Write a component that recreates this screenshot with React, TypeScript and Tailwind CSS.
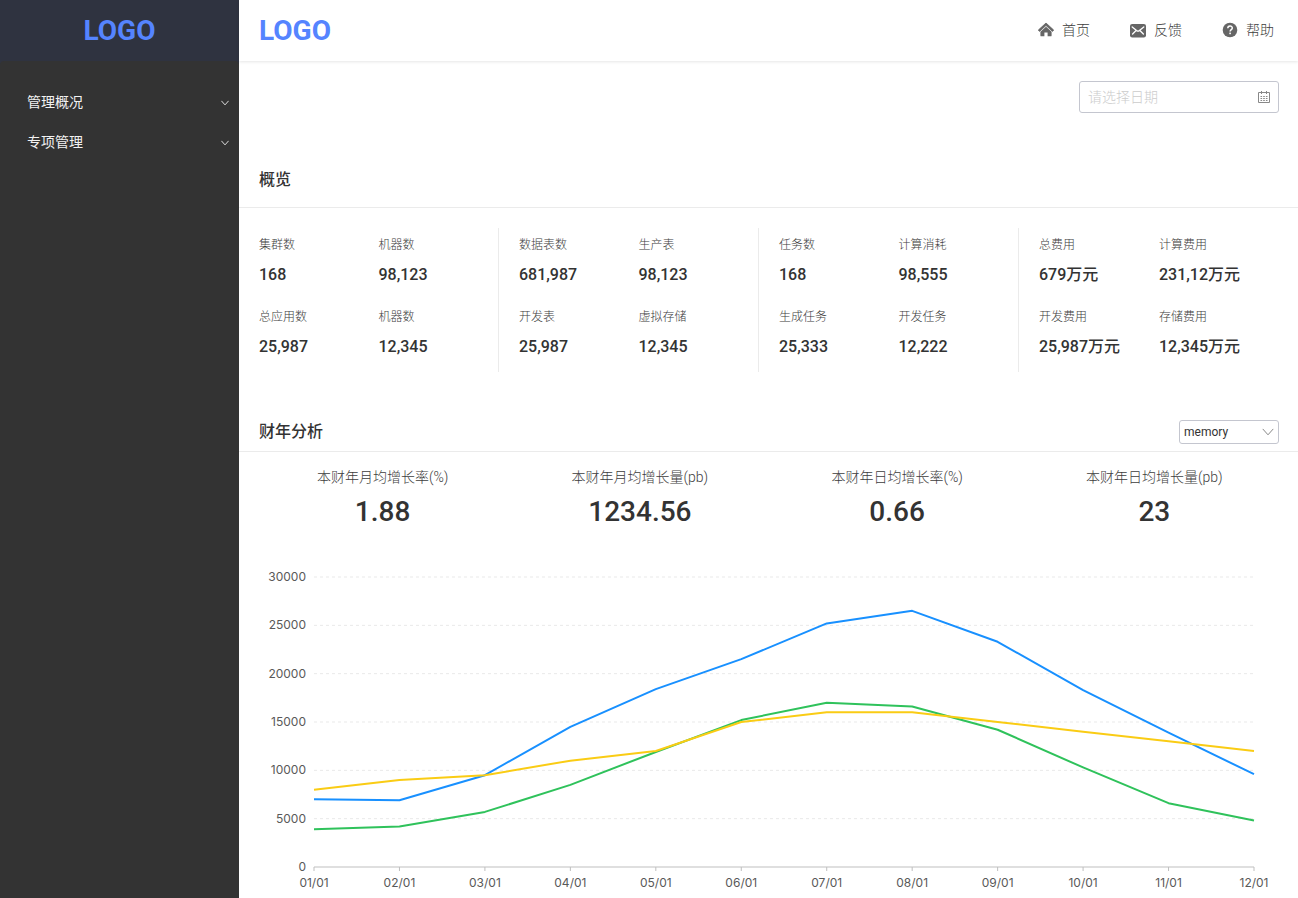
import React from 'react';

const menu = ['管理概况', '专项管理'];

const groups = [
  [
    ['集群数', '168'],
    ['机器数', '98,123'],
    ['总应用数', '25,987'],
    ['机器数', '12,345'],
  ],
  [
    ['数据表数', '681,987'],
    ['生产表', '98,123'],
    ['开发表', '25,987'],
    ['虚拟存储', '12,345'],
  ],
  [
    ['任务数', '168'],
    ['计算消耗', '98,555'],
    ['生成任务', '25,333'],
    ['开发任务', '12,222'],
  ],
  [
    ['总费用', '679万元'],
    ['计算费用', '231,12万元'],
    ['开发费用', '25,987万元'],
    ['存储费用', '12,345万元'],
  ],
];

const growth = [
  ['本财年月均增长率(%)', '1.88'],
  ['本财年月均增长量(pb)', '1234.56'],
  ['本财年日均增长率(%)', '0.66'],
  ['本财年日均增长量(pb)', '23'],
];

const months = ['01', '02', '03', '04', '05', '06', '07', '08', '09', '10', '11', '12'];
const ticks = [0, 5000, 10000, 15000, 20000, 25000, 30000];
const series = [
  { color: '#1890ff', data: [7000, 6900, 9500, 14500, 18400, 21500, 25200, 26500, 23300, 18300, 13900, 9600] },
  { color: '#2fc25b', data: [3900, 4200, 5700, 8500, 11900, 15200, 17000, 16600, 14200, 10300, 6600, 4800] },
  { color: '#facc14', data: [8000, 9000, 9500, 11000, 12000, 15000, 16000, 16000, 15000, 14000, 13000, 12000] },
];

const px = (i: number) => 75 + (i * 940) / 11;
const py = (v: number) => 307 - (v * 290) / 30000;

function HomeIcon() {
  return (
    <svg viewBox="0 0 16 16" className="size-4" fill="#666" aria-hidden="true">
      <path d="M8 1 0.3 8.1 1.5 9.4 8 3.5 14.5 9.4 15.7 8.1Z" stroke="#666" strokeWidth=".8" strokeLinejoin="round" />
      <path d="M8 4.7 2.4 9.8V13.4Q2.4 14.3 3.3 14.3H6.4V10.6H9.6V14.3H12.7Q13.6 14.3 13.6 13.4V9.8Z" />
    </svg>
  );
}

function MailIcon() {
  return (
    <svg viewBox="0 0 16 16" className="size-4" aria-hidden="true">
      <rect x="0" y="1.9" width="16" height="13.6" rx="2.2" fill="#666" />
      <path d="M2.2 5 6.6 8.6Q8 9.6 9.4 8.6L13.8 5M2.6 12 5.6 9M13.4 12 10.4 9" fill="none" stroke="#fff" strokeWidth="1.3" strokeLinecap="round" />
    </svg>
  );
}

function HelpIcon() {
  return (
    <svg viewBox="0 0 16 16" className="size-4" aria-hidden="true">
      <circle cx="8" cy="8" r="7.3" fill="#666" />
      <path d="M5.8 6.3C5.8 3.2 10.3 3.4 10.3 6 10.3 7.7 8.1 7.7 8.1 9.5" fill="none" stroke="#fff" strokeWidth="1.5" />
      <rect x="7.3" y="10.6" width="1.6" height="1.6" fill="#fff" />
    </svg>
  );
}

function CalendarIcon() {
  return (
    <svg viewBox="0 0 12 12" className="size-3" fill="none" stroke="#888" aria-hidden="true">
      <path d="M.5 1.5H11.5V11.5H.5ZM3.5 0V3M8.5 0V3" />
      <path d="M2.5 5.5H9.5M2.5 7.5H9.5M2.5 9.5H9.5" strokeDasharray="1.6 1.1" />
    </svg>
  );
}

function Chevron({ className, color }: { className: string; color: string }) {
  return (
    <svg viewBox="0 0 12 12" className={className} fill="none" stroke={color} aria-hidden="true">
      <path d="M1 3.2 6 8.8 11 3.2" vectorEffect="non-scaling-stroke" strokeLinecap="round" strokeLinejoin="round" />
    </svg>
  );
}

const nav = [
  { label: '首页', icon: <HomeIcon /> },
  { label: '反馈', icon: <MailIcon /> },
  { label: '帮助', icon: <HelpIcon /> },
];

function TrendChart() {
  return (
    <svg viewBox="0 0 1059 338" className="block w-full font-[Inter,sans-serif] text-[12px]" role="img" aria-label="财年分析">
      {ticks.slice(1).map((t) => (
        <line key={t} x1="75" x2="1015" y1={py(t)} y2={py(t)} stroke="#e9e9e9" strokeDasharray="3 3" />
      ))}
      {ticks.map((t) => (
        <text key={t} x="67" y={py(t) + 4} textAnchor="end" fill="#595959">
          {t}
        </text>
      ))}
      <line x1="75" x2="1015" y1="307" y2="307" stroke="#bfbfbf" />
      {months.map((m, i) => (
        <g key={m}>
          <line x1={px(i)} x2={px(i)} y1="307" y2="311" stroke="#bfbfbf" />
          <text x={px(i)} y="327" textAnchor="middle" fill="#595959">
            {m}/01
          </text>
        </g>
      ))}
      {series.map((s) => (
        <polyline key={s.color} points={s.data.map((v, i) => `${px(i)},${py(v)}`).join(' ')} fill="none" stroke={s.color} strokeWidth="2" strokeLinejoin="round" />
      ))}
    </svg>
  );
}

export default function App() {
  return (
    <div className="flex min-h-screen bg-white font-[Roboto,'Noto_Sans_CJK_SC',sans-serif] text-sm text-[#333]">
      <aside className="flex w-[239px] shrink-0 flex-col bg-[#2f3340]">
        <a href="#" className="flex h-[61px] items-center justify-center text-[28px] font-bold text-[#5584ff]">
          LOGO
        </a>
        <nav className="flex-1 rounded-t bg-[#333] pt-[21px]">
          {menu.map((m) => (
            <button key={m} type="button" className="flex h-10 w-full items-center justify-between pr-[10px] pl-[27px] text-[#f2f2f2]">
              {m}
              <Chevron className="mt-0.5 size-2" color="#ddd" />
            </button>
          ))}
        </nav>
      </aside>

      <div className="min-w-0 flex-1">
        <header className="flex h-[61px] items-center justify-between pr-6 pl-5 shadow-[0_1px_3px_rgba(0,0,0,0.1)]">
          <a href="#" className="text-[28px] font-bold text-[#5584ff]">
            LOGO
          </a>
          <nav className="flex gap-10 pb-0.5">
            {nav.map((n) => (
              <a key={n.label} href="#" className="flex items-center gap-2 font-light text-[#3d3d3d]">
                {n.icon}
                {n.label}
              </a>
            ))}
          </nav>
        </header>

        <main>
          <div className="flex justify-end pt-5 pr-[19px]">
            <label className="flex h-8 w-[200px] items-center rounded-[3px] border border-[#c4c6cf] px-2">
              <input aria-label="日期" placeholder="请选择日期" className="min-w-0 flex-1 font-light outline-none placeholder:text-[#ccc]" />
              <CalendarIcon />
            </label>
          </div>

          <section className="mt-[39px]">
            <h2 className="flex h-14 items-center border-b border-[#ebebeb] pl-5 text-base font-medium">概览</h2>
            <div className="grid grid-cols-4 pt-5 pr-[19px]">
              {groups.map((g, i) => (
                <dl key={i} className="grid grid-cols-2 border-r border-[#ebebeb] pl-5 last:border-r-0">
                  {g.map(([label, value]) => (
                    <div key={label + value} className="h-[72px] pt-2">
                      <dt className="text-xs leading-[18px] font-light text-[#3d3d3d]">{label}</dt>
                      <dd className="mt-[9px] text-base leading-6 font-medium">{value}</dd>
                    </div>
                  ))}
                </dl>
              ))}
            </div>
          </section>

          <section className="mt-10">
            <div className="flex h-10 items-center justify-between border-b border-[#ebebeb] pr-[19px] pl-5">
              <h2 className="text-base font-medium">财年分析</h2>
              <div className="relative">
                <select aria-label="指标" className="block h-6 w-[100px] appearance-none rounded-[3px] border border-[#c4c6cf] pl-1 text-xs">
                  <option>memory</option>
                </select>
                <span className="pointer-events-none absolute inset-y-0 right-[5px] flex items-center">
                  <Chevron className="size-3" color="#888" />
                </span>
              </div>
            </div>
            <dl className="grid grid-cols-4 px-[15px] pt-[15px] text-center">
              {growth.map(([label, value]) => (
                <div key={label}>
                  <dt className="leading-5 font-light text-[#3d3d3d]">{label}</dt>
                  <dd className="mt-[9px] text-[28px] leading-8 font-medium">{value}</dd>
                </div>
              ))}
            </dl>
            <div className="pt-8">
              <TrendChart />
            </div>
          </section>
        </main>
      </div>
    </div>
  );
}
